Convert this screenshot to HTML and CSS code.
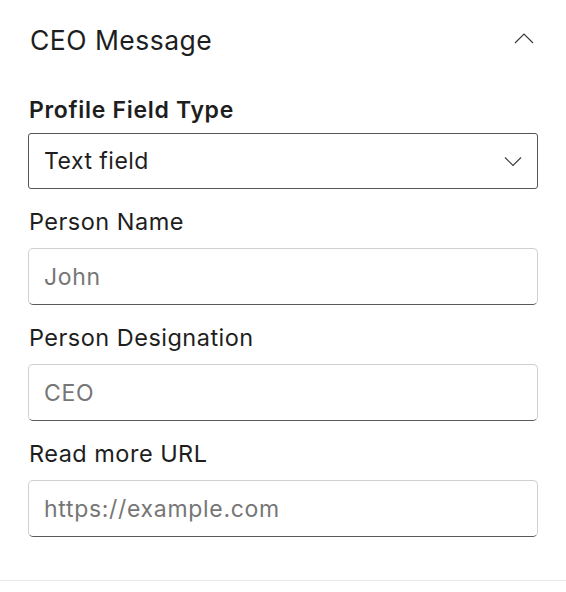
FILE: index.html
```html
<!DOCTYPE html>
<html lang="en">
<head>
<meta charset="utf-8">
<title>CEO Message</title>
<link rel="stylesheet" href="styles.css">
</head>
<body>
<section class="panel">
  <div class="panel-head">
    <h2 class="panel-title">CEO Message</h2>
    <svg class="chev-up" width="20" height="12" viewBox="0 0 20 12" aria-hidden="true">
      <path d="M1 11 L10 2 L19 11" fill="none" stroke="#3a3a3a" stroke-width="1.2"/>
    </svg>
  </div>
  <div class="panel-body">
    <div class="field">
      <label class="label label-bold">Profile Field Type</label>
      <div class="select">
        <span class="select-value">Text field</span>
        <svg class="chev-down" width="18" height="11" viewBox="0 0 18 11" aria-hidden="true">
          <path d="M1 1.5 L9 9.5 L17 1.5" fill="none" stroke="#3a3a3a" stroke-width="1.1"/>
        </svg>
      </div>
    </div>
    <div class="field">
      <label class="label">Person Name</label>
      <input class="input" type="text" placeholder="John">
    </div>
    <div class="field">
      <label class="label">Person Designation</label>
      <input class="input" type="text" placeholder="CEO">
    </div>
    <div class="field">
      <label class="label">Read more URL</label>
      <input class="input" type="text" placeholder="https://example.com">
    </div>
  </div>
</section>
</body>
</html>
```

FILE: styles.css
```css
* { box-sizing: border-box; }
html, body { margin: 0; padding: 0; background: #fff; }
body {
  font-family: Inter, "Noto Sans", "Liberation Sans", sans-serif;
  color: #1e1e1e;
  letter-spacing: 0.03em;
}
.panel {
  width: 566px;
  border-bottom: 1px solid #e8e8e8;
  padding: 0 28px 43px 28px;
}
.panel-head {
  height: 80px;
  display: flex;
  align-items: center;
  justify-content: space-between;
  padding-left: 2px;
}
.panel-title {
  margin: 0;
  font-size: 26.5px;
  font-weight: 400;
  color: #1e1e1e;
}
.chev-up { margin-right: 4px; margin-top: -4px; }
.panel-body {
  display: flex;
  flex-direction: column;
  gap: 21px;
  padding-top: 18px;
}
.field {
  display: flex;
  flex-direction: column;
  gap: 14px;
}
.label {
  display: block;
  font-size: 23.5px;
  line-height: 24px;
  color: #1e1e1e;
  padding-left: 1px;
}
.label-bold { font-weight: 600; font-size: 23px; letter-spacing: 0.03em; }
.select {
  height: 56px;
  border: 1px solid #555;
  border-radius: 3px;
  display: flex;
  align-items: center;
  justify-content: space-between;
  padding: 0 15px 0 15px;
  margin-top: -3px;
}
.select-value { font-size: 23px; color: #1e1e1e; }
.chev-down { margin-right: 0; }
.input {
  display: block;
  width: 100%;
  height: 57px;
  margin: 0;
  border: 1px solid #d0d0d0;
  border-bottom-color: #5a5a5a;
  border-radius: 5px;
  padding: 0 15px;
  font-family: inherit;
  font-size: 23px;
  letter-spacing: 0.03em;
  color: #1e1e1e;
  background: #fff;
  outline: none;
}
.input::placeholder { color: #767676; }
```
